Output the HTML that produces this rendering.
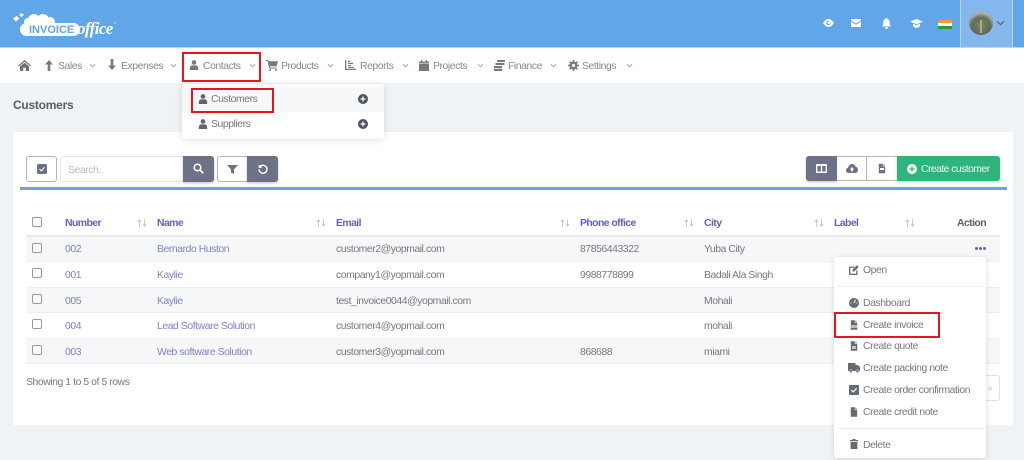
<!DOCTYPE html>
<html><head><meta charset="utf-8"><title>Customers</title>
<style>
html,body{margin:0;padding:0;width:1024px;height:460px;overflow:hidden;background:#f0f3f5;font-family:"Liberation Sans",sans-serif;font-size:10.4px;letter-spacing:-.43px;color:#6f7378}
#w{position:absolute;left:0;top:0;width:1024px;height:460px;overflow:hidden;filter:blur(.35px)}
.r{position:absolute}
.t{position:absolute;line-height:14px;white-space:nowrap;margin-top:1px}
.n{color:#85898e}
.h{color:#5f62c4;font-weight:bold;letter-spacing:-.55px}
.l{color:#7e80cf}
.m{color:#74787d}
.red{position:absolute;border:2px solid #e8151b;box-sizing:border-box}
svg{position:absolute;overflow:visible}
.cb{position:absolute;width:8px;height:8px;border:1px solid #999;border-radius:2px;background:#fff;left:32px}
</style></head><body>
<svg width="0" height="0" style="position:absolute">
<defs>
<symbol id="person" viewBox="0 0 12 12"><circle cx="6" cy="3" r="2.8" fill="currentColor"/><path d="M1 12V9.6C1 7.6 2.6 6.4 4 6.4h4c1.4 0 3 1.2 3 3.2V12z" fill="currentColor"/></symbol>
<symbol id="chev" viewBox="0 0 8 5"><path d="M1 1l3 3 3-3" fill="none" stroke="currentColor" stroke-width="1"/></symbol>
<symbol id="doc" viewBox="0 0 10 12"><path d="M1 0h5v3.4h3V12H1z" fill="currentColor"/><path d="M6.8 0L9 2.600H6.800z" fill="currentColor"/></symbol>
<symbol id="sort" viewBox="0 0 10 8"><path d="M2.500 8V1M.8 2.800L2.500 1l1.700 1.800M7.500 0v7M5.800 5.200L7.500 7l1.700-1.800" fill="none" stroke="currentColor" stroke-width=".8"/></symbol>
<symbol id="plus" viewBox="0 0 10 10"><circle cx="5" cy="5" r="5" fill="currentColor"/><path d="M5 2.500v5M2.500 5h5" stroke="#fff" stroke-width="1.300"/></symbol>
</defs></svg>
<div id="w">
<!-- header -->
<div class="r" style="left:0;top:0;width:1024px;height:47px;background:#62a6ea"></div>
<div class="r" style="left:0;top:47px;width:1024px;height:1px;background:#b9d7f5"></div>
<div class="r" style="left:0;top:48px;width:1024px;height:35px;background:#fff"></div>

<!-- logo -->
<svg style="left:12px;top:11px" width="108" height="27" viewBox="0 0 108 27">
<rect x="8" y="12" width="60" height="13" rx="6.500" fill="#fff"/>
<circle cx="16" cy="11" r="4" fill="#fff"/>
<circle cx="22" cy="9" r="6" fill="#fff"/>
<circle cx="31" cy="9" r="6" fill="#fff"/>
<circle cx="38" cy="11" r="5" fill="#fff"/>
<path d="M1 7.500l3.500-2.500 3 2.500-3.500 3zM7 4l2.500-2 2.500 2-2.500 2z" fill="#fff"/>
<text x="17" y="22" font-family="Liberation Sans" font-weight="bold" font-size="11" fill="#62a6ea" letter-spacing="0">INVOICE</text>
<text x="65" y="23" font-family="Liberation Serif" font-style="italic" font-weight="bold" font-size="17" fill="#fff" letter-spacing="-.6">office</text>
<circle cx="103" cy="12" r=".8" fill="#dcecfb"/>
</svg>

<!-- header right -->
<div class="r" style="left:960px;top:0;width:53px;height:47px;background:#84b8ed;border-left:1px solid #b2d2f3;border-right:1px solid #b2d2f3;box-sizing:border-box"></div>
<svg style="left:823px;top:19px" width="11" height="8" viewBox="0 0 11 8"><path d="M0 4C2 1 4 0 5.500 0S9 1 11 4C9 7 7 8 5.500 8S2 7 0 4z" fill="#fff"/><circle cx="5.500" cy="4" r="2.200" fill="#62a6ea"/><circle cx="6" cy="3.600" r="1.300" fill="#fff"/></svg>
<svg style="left:851px;top:19px" width="10" height="8" viewBox="0 0 10 8"><path d="M0 0h10v1.500L5 4.500 0 1.500zM0 2.700l5 3 5-3V8H0z" fill="#fff"/></svg>
<svg style="left:882px;top:18px" width="9" height="11" viewBox="0 0 9 11"><path d="M4.500 0c.6 0 1 .4 1 .9C7 1.400 7.700 2.700 7.700 4.300c0 2 .3 3 1.300 4.200H0c1-1.200 1.300-2.200 1.300-4.200C1.300 2.700 2 1.400 3.500.9c0-.5.400-.9 1-.9zM3 9.300h3C6 10.300 5.400 11 4.500 11S3 10.300 3 9.300z" fill="#fff"/></svg>
<svg style="left:910px;top:19px" width="13" height="9" viewBox="0 0 13 9"><path d="M6.500 0L13 2.600 6.500 5.200 0 2.600z" fill="#fff"/><path d="M3 4.800l3.500 1.400L10 4.800V7c-1 1.300-2.200 2-3.500 2S4 8.300 3 7z" fill="#fff"/></svg>
<div class="r" style="left:938px;top:20px;width:14px;height:3px;background:#f59a3c"></div>
<div class="r" style="left:938px;top:23px;width:14px;height:3px;background:#fafafa"></div>
<div class="r" style="left:938px;top:26px;width:14px;height:3px;background:#2e9a3a"></div>
<div class="r" style="left:969px;top:11px;width:24px;height:24px;border-radius:50%;background:radial-gradient(circle at 50% 60%,#7c8468 0,#5f6650 55%,#4e5160 100%);box-shadow:inset 0 4px 3px #b4b6b8"></div>
<div class="r" style="left:980px;top:20px;width:2px;height:13px;background:#a9ac9d"></div>
<svg style="left:996px;top:20px;color:#5d6470" width="9" height="6"><use href="#chev" width="9" height="6"/></svg>

<!-- nav -->
<svg style="left:18px;top:60px" width="13" height="11" viewBox="0 0 13 11"><path d="M6.500 0L13 5.600l-.8.8L6.500 1.700.8 6.400 0 5.600zM2 6.400l4.500-3.700L11 6.400V11H7.800V7.800H5.200V11H2z" fill="#6c7178"/></svg>
<svg style="left:45px;top:60px" width="8" height="11" viewBox="0 0 8 11"><path d="M4 0l4 4.500H5.300V11H2.700V4.500H0z" fill="#757a80"/></svg>
<div class="t n" style="left:58px;top:59px">Sales</div>
<svg style="left:89px;top:63px;color:#9a9ea4" width="7" height="5"><use href="#chev" width="7" height="5"/></svg>
<svg style="left:108px;top:59px" width="8" height="11" viewBox="0 0 8 11"><path d="M4 11L0 6.500h2.700V0h2.600v6.500H8z" fill="#757a80"/></svg>
<div class="t n" style="left:121px;top:59px">Expenses</div>
<svg style="left:170px;top:63px;color:#9a9ea4" width="7" height="5"><use href="#chev" width="7" height="5"/></svg>
<svg style="left:189px;top:60px;color:#757a80" width="10" height="10"><use href="#person" width="10" height="10"/></svg>
<div class="t n" style="left:203px;top:59px">Contacts</div>
<svg style="left:249px;top:63px;color:#9a9ea4" width="7" height="5"><use href="#chev" width="7" height="5"/></svg>
<svg style="left:266px;top:60px" width="12" height="11" viewBox="0 0 12 11"><path d="M0 0h2.200l.4 1.300H12l-1.300 5H3.800l.3 1.200h6.600v1H3.200L1.500 1H0z" fill="#757a80"/><circle cx="4.200" cy="10" r="1" fill="#757a80"/><circle cx="9.800" cy="10" r="1" fill="#757a80"/></svg>
<div class="t n" style="left:281px;top:59px">Products</div>
<svg style="left:327px;top:63px;color:#9a9ea4" width="7" height="5"><use href="#chev" width="7" height="5"/></svg>
<svg style="left:345px;top:60px" width="11" height="10" viewBox="0 0 11 10"><path d="M0 0h1.300v8.700H11V10H0zM3 5h3v1.200H3zM3 2.800h5v1.200H3zM3 .8h2V2H3zM3 7h6v1H3z" fill="#757a80"/></svg>
<div class="t n" style="left:360px;top:59px">Reports</div>
<svg style="left:402px;top:63px;color:#9a9ea4" width="7" height="5"><use href="#chev" width="7" height="5"/></svg>
<svg style="left:419px;top:60px" width="10" height="11" viewBox="0 0 10 11"><path d="M2 0h1.300v1.500h3.400V0H8v1.500h2V11H0V1.500h2z" fill="#757a80"/><path d="M0 3.200h10" stroke="#fff" stroke-width=".6"/></svg>
<div class="t n" style="left:433px;top:59px">Projects</div>
<svg style="left:477px;top:63px;color:#9a9ea4" width="7" height="5"><use href="#chev" width="7" height="5"/></svg>
<svg style="left:494px;top:60px" width="11" height="11" viewBox="0 0 11 11"><path d="M3 0h8v2H3zM1.500 3h9v2h-9zM0 6h8v2.200H0zM0 9h8v2H0z" fill="#757a80"/></svg>
<div class="t n" style="left:508px;top:59px">Finance</div>
<svg style="left:550px;top:63px;color:#9a9ea4" width="7" height="5"><use href="#chev" width="7" height="5"/></svg>
<svg style="left:568px;top:60px" width="11" height="11" viewBox="0 0 11 11"><circle cx="5.500" cy="5.500" r="2.800" fill="none" stroke="#757a80" stroke-width="2.400"/><path d="M5.500 0v11M0 5.500h11M1.600 1.600l7.800 7.800M9.400 1.600L1.600 9.400" stroke="#757a80" stroke-width="1.500" stroke-dasharray="2 7"/></svg>
<div class="t n" style="left:582px;top:59px">Settings</div>
<svg style="left:626px;top:63px;color:#9a9ea4" width="7" height="5"><use href="#chev" width="7" height="5"/></svg>

<div class="t" style="left:13px;top:97px;font-size:12px;font-weight:bold;color:#5a5f66;letter-spacing:-.25px">Customers</div>

<!-- card -->
<div class="r" style="left:13px;top:132px;width:1000px;height:293px;background:#fff;border-radius:2px"></div>

<!-- toolbar -->
<div class="r" style="left:26px;top:156px;width:31px;height:26px;border:1px solid #b3b5bd;border-radius:3px;background:#fff;box-sizing:border-box"></div>
<svg style="left:37px;top:164px" width="10" height="10" viewBox="0 0 10 10"><rect width="10" height="10" rx="1.500" fill="#6d7186"/><path d="M2.500 5l1.800 1.800 3.200-3.500" fill="none" stroke="#fff" stroke-width="1.100"/></svg>
<div class="r" style="left:60px;top:156px;width:124px;height:26px;border:1px solid #e3e5e8;border-radius:3px;background:#fff;box-sizing:border-box"></div>
<div class="t" style="left:68px;top:163px;color:#b8bbc2">Search..</div>
<div class="r" style="left:183px;top:156px;width:31px;height:26px;background:#6e7288;border-radius:0 3px 3px 0;box-shadow:0 1px 2px rgba(0,0,0,.25)"></div>
<svg style="left:193px;top:163px" width="11" height="11" viewBox="0 0 11 11"><circle cx="4.500" cy="4.500" r="3.300" fill="none" stroke="#fff" stroke-width="1.500"/><path d="M7 7l3.300 3.300" stroke="#fff" stroke-width="1.800"/></svg>
<div class="r" style="left:217px;top:156px;width:31px;height:26px;border:1px solid #b3b5bd;border-radius:3px 0 0 3px;background:#fff;box-sizing:border-box"></div>
<svg style="left:227px;top:165px" width="11" height="9" viewBox="0 0 11 9"><path d="M0 0h11L7 4.500V9L4 7.500V4.500z" fill="#6d7186"/></svg>
<div class="r" style="left:247px;top:156px;width:31px;height:26px;background:#6e7288;border-radius:0 3px 3px 0;box-shadow:0 1px 2px rgba(0,0,0,.25)"></div>
<svg style="left:258px;top:164px" width="10" height="10" viewBox="0 0 10 10"><path d="M2 2.600A4 4 0 1 1 1 5.500" fill="none" stroke="#fff" stroke-width="1.400"/><path d="M.7 0.500v3.400h3.400z" fill="#fff"/></svg>

<div class="r" style="left:806px;top:156px;width:31px;height:25px;background:#6e7288;border-radius:3px 0 0 3px;box-shadow:0 1px 2px rgba(0,0,0,.25)"></div>
<svg style="left:816px;top:164px" width="11" height="9" viewBox="0 0 11 9"><rect width="11" height="9" rx="1" fill="#fff"/><rect x="1.400" y="2" width="3.400" height="5.600" fill="#6e7288"/><rect x="6.200" y="2" width="3.400" height="5.600" fill="#6e7288"/></svg>
<div class="r" style="left:837px;top:156px;width:60px;height:25px;background:#fff;border-top:1px solid #b3b5bd;border-bottom:1px solid #b3b5bd;box-sizing:border-box"></div>
<div class="r" style="left:866px;top:156px;width:1px;height:25px;background:#b3b5bd"></div>
<svg style="left:846px;top:164px" width="12" height="9" viewBox="0 0 12 9"><path d="M3 9C1 9 0 7.700 0 6.200 0 4.800 1 3.800 2.200 3.600 2.500 1.500 4 0 6 0c1.800 0 3.200 1.100 3.600 2.800C11 3 12 4.300 12 6c0 1.700-1.200 3-3 3z" fill="#6d7186"/><path d="M6 3L8.200 5.500H6.800V7.500H5.200V5.500H3.800z" fill="#fff"/></svg>
<svg style="left:878px;top:163px;color:#6d7186" width="8" height="11"><use href="#doc" width="8" height="11"/></svg>
<div class="r" style="left:880px;top:168px;width:4px;height:2px;background:#fff"></div>
<div class="r" style="left:897px;top:156px;width:103px;height:25px;background:#2fb57c;border-radius:0 3px 3px 0;box-shadow:0 1px 3px rgba(47,181,124,.4)"></div>
<svg style="left:907px;top:164px;color:#fff" width="10" height="10" viewBox="0 0 10 10"><circle cx="5" cy="5" r="5" fill="#fff"/><path d="M5 2.500v5M2.500 5h5" stroke="#2fb57c" stroke-width="1.300"/></svg>
<div class="t" style="left:921px;top:162px;color:#e9f8f1;letter-spacing:-.55px">Create customer</div>
<div class="r" style="left:20px;top:187px;width:987px;height:3px;background:#62a6ea"></div>

<!-- table -->
<div class="cb" style="top:217px"></div>
<div class="t h" style="left:65px;top:216px">Number</div>
<div class="t h" style="left:157px;top:216px">Name</div>
<div class="t h" style="left:336px;top:216px">Email</div>
<div class="t h" style="left:580px;top:216px">Phone office</div>
<div class="t h" style="left:704px;top:216px">City</div>
<div class="t h" style="left:834px;top:216px">Label</div>
<div class="t" style="left:957px;top:216px;font-weight:bold;color:#5d6168;letter-spacing:-.55px">Action</div>
<svg style="left:137px;top:219px;color:#b9bdc4" width="10" height="8"><use href="#sort" width="10" height="8"/></svg>
<svg style="left:316px;top:219px;color:#b9bdc4" width="10" height="8"><use href="#sort" width="10" height="8"/></svg>
<svg style="left:560px;top:219px;color:#b9bdc4" width="10" height="8"><use href="#sort" width="10" height="8"/></svg>
<svg style="left:684px;top:219px;color:#b9bdc4" width="10" height="8"><use href="#sort" width="10" height="8"/></svg>
<svg style="left:814px;top:219px;color:#b9bdc4" width="10" height="8"><use href="#sort" width="10" height="8"/></svg>
<svg style="left:905px;top:219px;color:#b9bdc4" width="10" height="8"><use href="#sort" width="10" height="8"/></svg>
<div class="r" style="left:26px;top:235px;width:974px;height:2px;background:#e8eaed"></div>

<div class="r" style="left:26px;top:237px;width:974px;height:24px;background:#f6f7f9"></div>
<div class="r" style="left:26px;top:288px;width:974px;height:24px;background:#f6f7f9"></div>
<div class="r" style="left:26px;top:339px;width:974px;height:24px;background:#f6f7f9"></div>
<div class="r" style="left:26px;top:261px;width:974px;height:1px;background:#eceef0"></div>
<div class="r" style="left:26px;top:287px;width:974px;height:1px;background:#eceef0"></div>
<div class="r" style="left:26px;top:312px;width:974px;height:1px;background:#eceef0"></div>
<div class="r" style="left:26px;top:338px;width:974px;height:1px;background:#eceef0"></div>
<div class="r" style="left:26px;top:363px;width:974px;height:1px;background:#eceef0"></div>

<div class="cb" style="top:243px"></div>
<div class="t l" style="left:65px;top:242px">002</div>
<div class="t l" style="left:157px;top:242px">Bernardo Huston</div>
<div class="t m" style="left:336px;top:242px">customer2@yopmail.com</div>
<div class="t m" style="left:580px;top:242px">87856443322</div>
<div class="t m" style="left:704px;top:242px">Yuba City</div>
<div class="r" style="left:975px;top:247px;width:3px;height:3px;border-radius:50%;background:#5f62c4;box-shadow:4px 0 0 #5f62c4,8px 0 0 #5f62c4"></div>

<div class="cb" style="top:268px"></div>
<div class="t l" style="left:65px;top:268px">001</div>
<div class="t l" style="left:157px;top:268px">Kaylie</div>
<div class="t m" style="left:336px;top:268px">company1@yopmail.com</div>
<div class="t m" style="left:580px;top:268px">9988778899</div>
<div class="t m" style="left:704px;top:268px">Badali Ala Singh</div>

<div class="cb" style="top:294px"></div>
<div class="t l" style="left:65px;top:294px">005</div>
<div class="t l" style="left:157px;top:294px">Kaylie</div>
<div class="t m" style="left:336px;top:294px">test_invoice0044@yopmail.com</div>
<div class="t m" style="left:704px;top:294px">Mohali</div>

<div class="cb" style="top:319px"></div>
<div class="t l" style="left:65px;top:319px">004</div>
<div class="t l" style="left:157px;top:319px">Lead Software Solution</div>
<div class="t m" style="left:336px;top:319px">customer4@yopmail.com</div>
<div class="t m" style="left:704px;top:319px">mohali</div>

<div class="cb" style="top:345px"></div>
<div class="t l" style="left:65px;top:345px">003</div>
<div class="t l" style="left:157px;top:345px">Web software Solution</div>
<div class="t m" style="left:336px;top:345px">customer3@yopmail.com</div>
<div class="t m" style="left:580px;top:345px">868688</div>
<div class="t m" style="left:704px;top:345px">miami</div>

<div class="t m" style="left:26px;top:375px">Showing 1 to 5 of 5 rows</div>
<div class="r" style="left:975px;top:375px;width:25px;height:26px;border:1px solid #e0e2e5;border-radius:3px;box-sizing:border-box"></div>
<div class="t" style="left:987px;top:381px;color:#c4c7cc">»</div>

<!-- contacts dropdown -->
<div class="r" style="left:182px;top:84px;width:202px;height:55px;background:#fff;border-radius:3px;box-shadow:0 1px 8px rgba(0,0,0,.12)"></div>
<div class="r" style="left:182px;top:87px;width:202px;height:25px;background:#f6f7f9"></div>
<svg style="left:198px;top:94px;color:#5f6470" width="10" height="10"><use href="#person" width="10" height="10"/></svg>
<div class="t m" style="left:211px;top:92px">Customers</div>
<svg style="left:358px;top:94px;color:#4f545c" width="10" height="10"><use href="#plus" width="10" height="10"/></svg>
<svg style="left:198px;top:119px;color:#5f6470" width="10" height="10"><use href="#person" width="10" height="10"/></svg>
<div class="t m" style="left:211px;top:117px">Suppliers</div>
<svg style="left:358px;top:119px;color:#4f545c" width="10" height="10"><use href="#plus" width="10" height="10"/></svg>

<!-- action menu -->
<div class="r" style="left:834px;top:257px;width:152px;height:201px;background:#fff;border-radius:3px;box-shadow:0 1px 6px rgba(0,0,0,.14)"></div>
<svg style="left:849px;top:265px" width="10" height="10" viewBox="0 0 10 10"><path d="M0 1.500h5.500v1.300H1.300v5.900h5.900V5.500h1.300V10H0z" fill="#666b73"/><path d="M3.500 4.800L8 .3 9.700 2 5.200 6.500H3.500z" fill="#666b73"/></svg>
<div class="t m" style="left:863px;top:263px">Open</div>
<div class="r" style="left:837px;top:286px;width:146px;height:1px;background:#eceef0"></div>
<svg style="left:849px;top:298px" width="10" height="10" viewBox="0 0 10 10"><circle cx="5" cy="5" r="5" fill="#666b73"/><path d="M5 5L6.500 1.800M1.500 5h1M7.500 5h1" stroke="#fff" stroke-width="1"/></svg>
<div class="t m" style="left:863px;top:296px">Dashboard</div>
<svg style="left:850px;top:320px;color:#666b73" width="8" height="10"><use href="#doc" width="8" height="10"/></svg>
<div class="r" style="left:851px;top:325px;width:6px;height:3px;background:#b6b9bd"></div>
<div class="t m" style="left:863px;top:318px">Create invoice</div>
<svg style="left:850px;top:341px;color:#666b73" width="8" height="10"><use href="#doc" width="8" height="10"/></svg>
<div class="r" style="left:852px;top:346px;width:4px;height:3px;background:#c2c4c8"></div>
<div class="t m" style="left:863px;top:339px">Create quote</div>
<svg style="left:848px;top:363px" width="12" height="10" viewBox="0 0 12 10"><path d="M0 0h7.500v2H10l2 2.500V8H0z" fill="#666b73"/><circle cx="2.800" cy="8.300" r="1.500" fill="#666b73" stroke="#fff" stroke-width=".5"/><circle cx="9.400" cy="8.300" r="1.500" fill="#666b73" stroke="#fff" stroke-width=".5"/></svg>
<div class="t m" style="left:863px;top:361px">Create packing note</div>
<svg style="left:849px;top:385px" width="10" height="10" viewBox="0 0 10 10"><rect width="10" height="10" rx="1" fill="#666b73"/><path d="M2.300 5l1.900 1.900 3.500-3.700" fill="none" stroke="#fff" stroke-width="1.200"/></svg>
<div class="t m" style="left:863px;top:383px">Create order confirmation</div>
<svg style="left:850px;top:407px;color:#666b73" width="8" height="10"><use href="#doc" width="8" height="10"/></svg>
<div class="t m" style="left:863px;top:405px">Create credit note</div>
<div class="r" style="left:837px;top:428px;width:146px;height:1px;background:#eceef0"></div>
<svg style="left:850px;top:439px" width="8" height="10" viewBox="0 0 8 10"><path d="M0 1h2.500V0h3v1H8v1.300H0zM.6 3h6.800v7H.6z" fill="#666b73"/></svg>
<div class="t m" style="left:863px;top:438px">Delete</div>

<!-- red annotation boxes -->
<div class="red" style="left:182px;top:52px;width:79px;height:30px"></div>
<div class="red" style="left:191px;top:88px;width:83px;height:25px"></div>
<div class="red" style="left:834px;top:312px;width:106px;height:26px"></div>
</div>
</body></html>
